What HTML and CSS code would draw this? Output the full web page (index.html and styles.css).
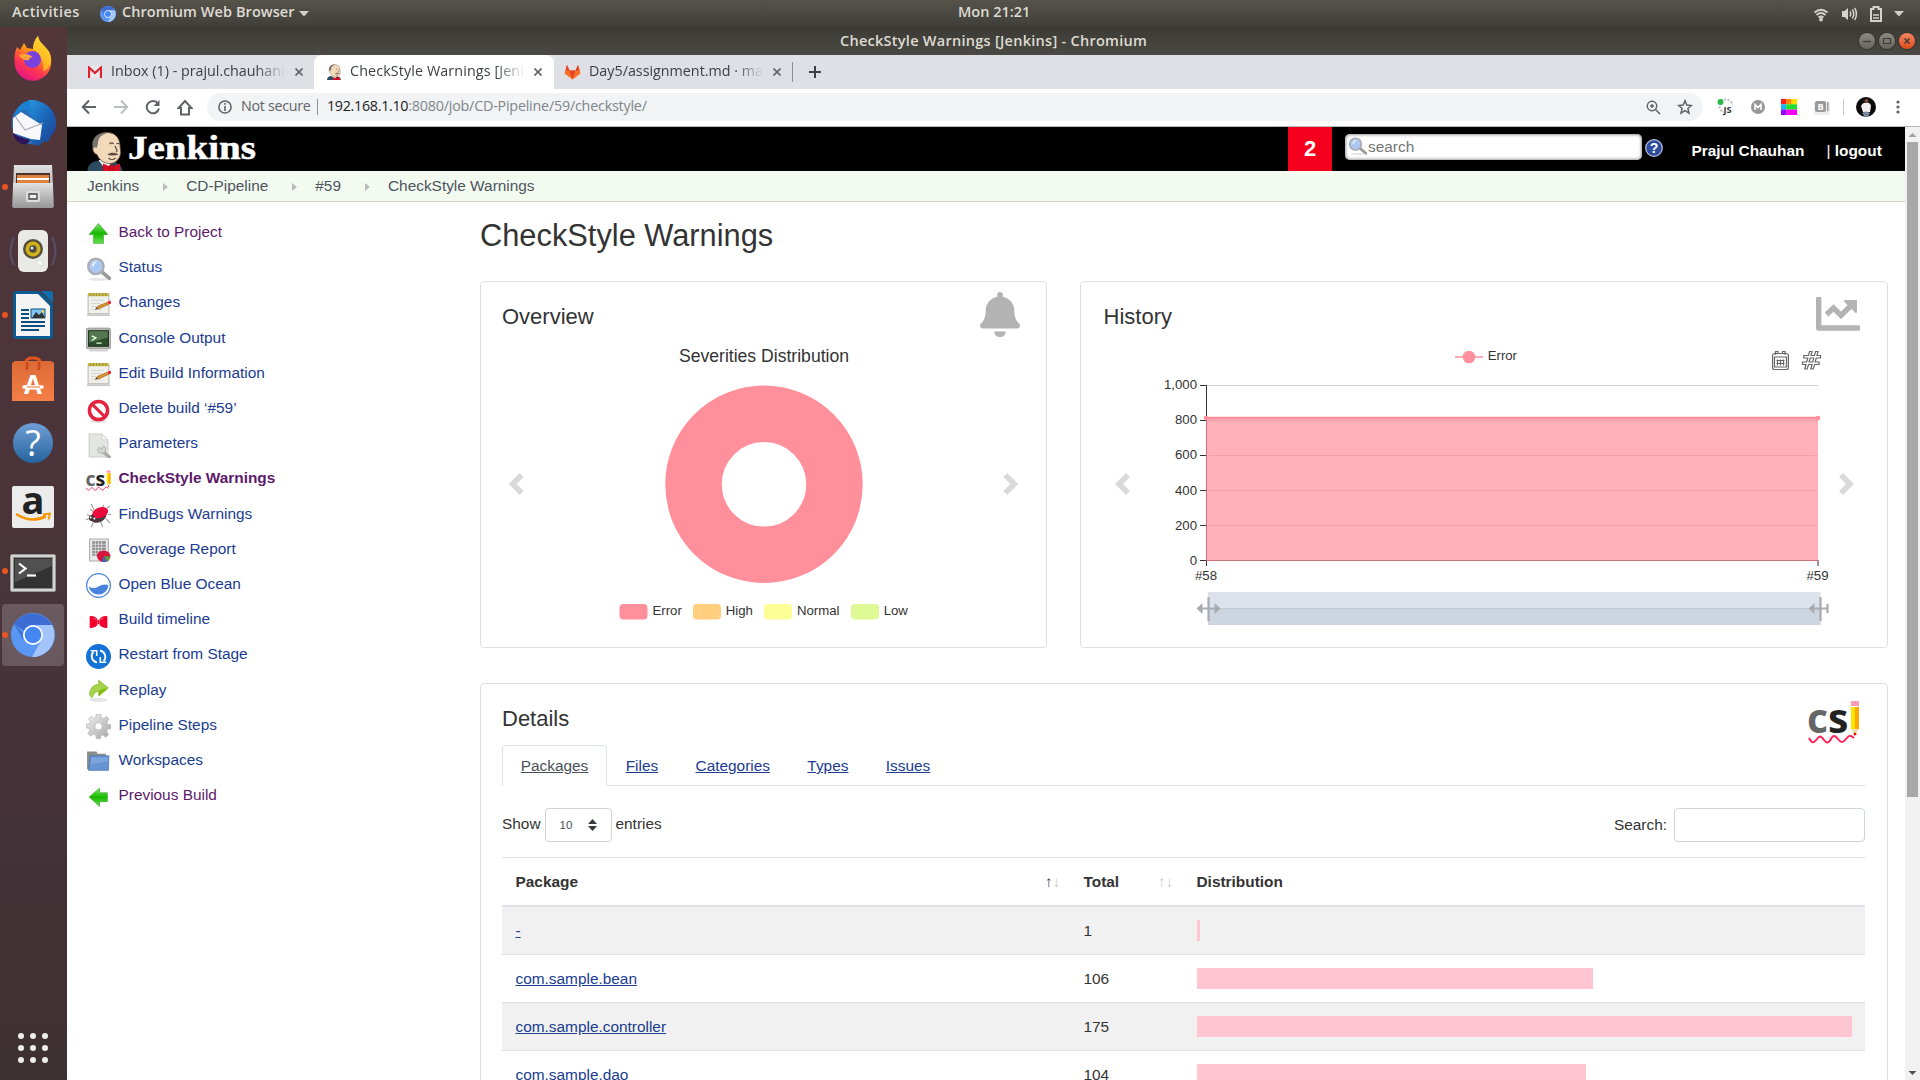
FILE: index.html
```html
<!DOCTYPE html>
<html lang="en">
<head>
<meta charset="utf-8">
<title>CheckStyle Warnings [Jenkins]</title>
<link rel="stylesheet" href="styles.css">
</head>
<body>
<svg class="defs" width="0" height="0">
  <defs>
    <linearGradient id="gFox" x1="0.8" y1="0" x2="0.3" y2="1"><stop offset="0" stop-color="#fff44f"/><stop offset=".4" stop-color="#ff980e"/><stop offset=".7" stop-color="#ff3750"/><stop offset="1" stop-color="#e31587"/></linearGradient>
    <linearGradient id="gBird" x1="0" y1="0" x2="1" y2="1"><stop offset="0" stop-color="#2aa0e8"/><stop offset=".5" stop-color="#1b66b8"/><stop offset="1" stop-color="#1d3f92"/></linearGradient>
    <linearGradient id="gMetal" x1="0" y1="0" x2="0" y2="1"><stop offset="0" stop-color="#e0e0e0"/><stop offset="1" stop-color="#979797"/></linearGradient>
    <linearGradient id="gOrange" x1="0" y1="0" x2="0" y2="1"><stop offset="0" stop-color="#dd6a35"/><stop offset="1" stop-color="#f47f47"/></linearGradient>
    <linearGradient id="gBlue" x1="0" y1="0" x2="0" y2="1"><stop offset="0" stop-color="#6f9fd4"/><stop offset="1" stop-color="#27649f"/></linearGradient>
    <linearGradient id="gGreen" x1="0" y1="0" x2="0" y2="1"><stop offset="0" stop-color="#7ce86a"/><stop offset=".5" stop-color="#19b800"/><stop offset="1" stop-color="#5fe04a"/></linearGradient>
    <linearGradient id="gGear" x1="0" y1="0" x2="1" y2="1"><stop offset="0" stop-color="#f2f2f2"/><stop offset="1" stop-color="#a5a5a5"/></linearGradient>
    <symbol id="notepad" viewBox="0 0 24 24">
      <path d="M2 3h20v18H2z" fill="#f0f0ec" stroke="#b8b8b0"/><path d="M1 22.3h22" stroke="#c9c9c9" stroke-width="1.6"/>
      <path d="M2 1h20v3H2z" fill="#c7b84a"/><path d="M4 1v3M7 1v3M10 1v3M13 1v3M16 1v3M19 1v3" stroke="#8f8430" stroke-width=".8"/>
      <path d="M5 8h12M5 11h9M5 14h5M5 17h10" stroke="#d4d4d0"/>
      <path d="M9 16.500l2.500-3 10-4 1 2-10 4.500z" fill="#dd9430" stroke="#9a6014" stroke-width=".6"/><circle cx="22.500" cy="10" r="1.600" fill="#e8293e"/><path d="M9 16.500l1.400-1.800.8 1.400z" fill="#333"/>
    </symbol>
    <symbol id="jenkinsHead" viewBox="0 0 35 40">
      <path d="M0 40c0-6 4-9 9-10h14c7 1 11 4 12 10z" fill="#2d4b5e"/>
      <path d="M11 29l8 11 6-11z" fill="#fff"/>
      <path d="M6 14C7 6 13 1.500 19.500 1.500c8 0 12.500 5 13 12.500 0 4 1.500 7 0 11s-5 7.500-10 7.500c-7 0-11-4-13-9-4-1-5-6-3.500-9.500z" fill="#f2d9ba" stroke="#5a4838" stroke-width=".8"/>
      <path d="M5.500 17C3 10 8 2 17 1.500l4 .3c-6 1-10 4.500-10.500 9.500 0 3-1 4.500-1.500 6l-1.500-1z" fill="#77736e"/>
      <path d="M22 13c1.500-1.500 3-1.500 4 0M29 13c1-1 2-1 2.500 0M27.500 15c1 3 3.500 5 1 6M21 27c2 2 5 2 7 0" stroke="#54443a" fill="none" stroke-width="1.100"/>
      <path d="M20 23.500c3-2.500 8-2 11 0-3 1-8 1.500-11 0z" fill="#5b4a40"/>
      <path d="M15.500 32.500l7 3v-1.500h3.500v1.500l6.500-3V40H15.500z" fill="#dc0a22"/><path d="M22.500 34v6M26 34v6" stroke="#8f0010" stroke-width=".7"/>
    </symbol>
    <symbol id="csIcon" viewBox="0 0 52 44">
      <text x="-1" y="33" class="cs-c">c</text><text x="20" y="33" class="cs-s">s</text>
      <path d="M43 1h8v5h-8z" fill="#ff9bb5"/><path d="M43 7h8v22h-8z" fill="#ffe600"/><path d="M47 7h4v22h-4z" fill="#ffa800"/><path d="M43 29h8l-4 6z" fill="#f3deb0"/><circle cx="47" cy="34" r="1.500" fill="#e11"/>
      <path d="M1 38c3 6 5 5 8 1s4-3 7 1 5 3 7-1 4-4 7 0 5 4 8 0 4-4 8-1" fill="none" stroke="#ff2255" stroke-width="2"/>
    </symbol>
    <symbol id="chromiumIcon" viewBox="0 0 44 44">
      <circle cx="22" cy="22" r="22" fill="#5a97f5"/><path d="M3 11A22 22 0 0 1 41 12H22A10 10 0 0 0 13 18z" fill="#3d6cd5"/><path d="M41 12A22 22 0 0 1 21 44L31 26Q33 17 25 12z" fill="#a2c4fb"/><path d="M3 11l10 17-2-9z" fill="#3f70cf"/>
      <circle cx="22" cy="22" r="10" fill="#fff"/><circle cx="22" cy="22" r="8.300" fill="#4586f3"/>
    </symbol>
    <symbol id="magnifier" viewBox="0 0 24 24">
      <ellipse cx="12" cy="21.500" rx="9" ry="1.500" fill="#e6e6e6"/><path d="M15.500 14.500l7 6" stroke="#9a9a9a" stroke-width="3.600" stroke-linecap="round"/><circle cx="9.500" cy="9" r="7.300" fill="#bcd4f5" stroke="#a9adb8" stroke-width="2.400"/><circle cx="9.500" cy="9" r="5.500" fill="#a9c8f3"/><path d="M5.500 8a4.500 4.500 0 0 1 6-3.500c-2 .5-4 2-4 5z" fill="#e8f2ff"/>
    </symbol>
  </defs>
</svg>

<header class="topbar">
  <span class="activities">Activities</span>
  <svg width="16" height="16" class="app-ico"><use href="#chromiumIcon"/></svg>
  <span class="appname">Chromium Web Browser</span>
  <svg width="10" height="6" class="caret"><path d="M0 0h10L5 5.500z" fill="#d0cfca"/></svg>
  <span class="clock">Mon 21:21</span>
  <div class="status">
    <svg width="16" height="16" fill="none" stroke="#d3d2cd" stroke-width="1.800"><path d="M1.500 6.500q6.500-5.500 13 0M3.500 9q4.500-4 9 0M5.500 11.500q2.500-2 5 0"/><circle cx="8" cy="13.500" r="1" fill="#d3d2cd"/></svg>
    <svg width="17" height="16" fill="none" stroke="#d3d2cd" stroke-width="1.500"><path d="M1 5h2.500L7 2v12L3.500 11H1z" fill="#d3d2cd" stroke="none"/><path d="M9 5.500q1.500 2.500 0 5M11.300 3.500q3 4.500 0 9M13.700 2q3.500 6 0 12"/></svg>
    <svg width="12" height="16" fill="none" stroke="#d3d2cd" stroke-width="2"><path d="M3.500 1h5v2H11v12H1V3h2.500z"/><path d="M3 9h6M3 12h6" stroke-width="1.500"/></svg>
    <svg width="10" height="6"><path d="M0 0h10L5 5.500z" fill="#d0cfca"/></svg>
  </div>
</header>

<div class="desktop">
  <nav class="dock">
    <div class="dock-item fox"><svg width="38" height="46" viewBox="0 0 38 46"><path d="M3 12l3 3 4-7 3 5 6 1c0-5 2-10 5-13 1 6 5 8 8 12 3 3 6 7 5 17A18.300 18.300 0 0 1 .6 28C0 21 1 16 3 12z" fill="url(#gFox)"/><path d="M24 1c1 6 5 8 8 12 3 3 6 7 5 15-2 5-6 8-8 8 2-8-2-16-10-22 0-5 2-10 5-13z" fill="#ffc928" opacity=".75"/><circle cx="18.500" cy="24.500" r="8.500" fill="#7840dc"/><path d="M5 20c5-2 10-1 14 2-2 0-4 1-4 3-4 1-8-1-10-5z" fill="#ffa436"/></svg></div>
    <div class="dock-item"><svg width="48" height="48" viewBox="0 0 48 48"><circle cx="24" cy="24" r="21.500" fill="#2b6cb8"/><path d="M20 1c12-1 25 7 27 20 1 8-2 13-5 16l-3 6-5-1-4 5-8-3 9-14L15 6z" fill="url(#gBird)"/><path d="M4 19l8-6 21 13-2 15-9-1L4 34z" fill="#f8f8fa"/><path d="M6 17l10 14 18-7" fill="none" stroke="#aab" stroke-width="1.200"/><path d="M5 18C8 7 14 1 22 2c-2 6 0 9 6 15L15 10z" fill="#1d7fd0"/><path d="M4 34c5 4 12 5 17 7-1 3-4 5-8 4-5-2-8-6-9-11z" fill="#2d1458"/></svg></div>
    <div class="dock-item running"><svg width="42" height="44" viewBox="0 0 42 44"><path d="M2 0h38l2 42H0z" fill="url(#gMetal)"/><path d="M4 8h34v11H4z" fill="#46352e"/><path d="M5 10h32v8H5z" fill="#e0823a"/><path d="M5 13h32v2H5z" fill="#fff"/><path d="M1 18h40v25H1z" fill="url(#gMetal)"/><rect x="14" y="26" width="14" height="11" rx="2" fill="#ddd"/><path d="M17 29h8v5h-8z" fill="#eee" stroke="#444" stroke-width="1.300"/></svg></div>
    <div class="dock-item"><svg width="48" height="44" viewBox="0 0 48 44"><path d="M5 8q-7 14 0 28M43 8q7 14 0 28" fill="none" stroke="#56506a" stroke-width="2"/><rect x="9" y="1" width="30" height="42" rx="6" fill="#e9e9e6"/><circle cx="24" cy="20" r="10" fill="#55503c"/><circle cx="24" cy="20" r="7.500" fill="#d2b11c"/><circle cx="24" cy="20" r="3.800" fill="#4c4a44"/><circle cx="23" cy="19" r="1.500" fill="#ddd"/><circle cx="31" cy="34" r="3" fill="#fafafa" stroke="#ccc" stroke-width=".6"/></svg></div>
    <div class="dock-item running"><svg width="40" height="48" viewBox="0 0 40 48"><path d="M3 0h23l14 13v32a3 3 0 0 1-3 3H3a3 3 0 0 1-3-3V3a3 3 0 0 1 3-3z" fill="#0d5c91"/><path d="M28 0h9a3 3 0 0 1 3 3v9z" fill="#0f6fae"/><path d="M3 3h22l12 12v30H3z" fill="#f4f4f4"/><path d="M8 19h8M8 23h8M8 27h8M8 31h24M8 35h24M8 39h18" stroke="#0d4f7f" stroke-width="2"/><path d="M18 18h14v9H18z" fill="#7fc7f2" stroke="#0d4f7f"/><path d="M19 27l4-6 3 3 3-3 3 6z" fill="#333"/><circle cx="30" cy="20.500" r="1.300" fill="#ffd23e"/></svg></div>
    <div class="dock-item"><svg width="42" height="44" viewBox="0 0 42 44"><path d="M14 8V5q0-4 7-4t7 4v8M14 8v6" fill="none" stroke="#e0531f" stroke-width="3"/><path d="M0 6l3-2h36l3 2v38H0z" fill="url(#gOrange)"/><path d="M15 5v8M27 5v8" stroke="#c9481c" stroke-width="2.500"/><text x="21" y="36.500" class="store-a">A</text><path d="M12 30h18" stroke="#fff" stroke-width="3.600" stroke-linecap="round"/><path d="M15 30h13" stroke="#ee6d30" stroke-width="1"/></svg></div>
    <div class="dock-item"><svg width="42" height="42" viewBox="0 0 42 42"><circle cx="21" cy="21" r="20" fill="url(#gBlue)"/><text x="21" y="33.500" class="help-q">?</text></svg></div>
    <div class="dock-item"><svg width="42" height="42" viewBox="0 0 42 42"><rect width="42" height="42" rx="2" fill="#ececec"/><text x="21" y="28" class="amz">a</text><path d="M4 28q16 10 30 2" fill="none" stroke="#f79400" stroke-width="2.600"/><path d="M31 28.500l7-1-1.500 6" fill="none" stroke="#f79400" stroke-width="1.800"/></svg></div>
    <div class="dock-item running term"><svg width="46" height="38" viewBox="0 0 46 38"><rect x=".5" y=".5" width="45" height="37" rx="1.500" fill="#d4d4d4" stroke="#999"/><path d="M3.500 3.500h39v31h-39z" fill="#333" stroke="#888"/><path d="M5 5h37v7L5 28z" fill="#505050"/><path d="M9 9.500l6.500 5-6.500 5" fill="none" stroke="#fff" stroke-width="2.200"/><path d="M17 21.500h9" stroke="#fff" stroke-width="2.200"/></svg></div>
    <div class="dock-item running active"><svg width="44" height="44"><use href="#chromiumIcon"/></svg></div>
    <svg class="apps" width="32" height="32" fill="#eeeeec"><circle cx="4" cy="4" r="3"/><circle cx="16" cy="4" r="3"/><circle cx="28" cy="4" r="3"/><circle cx="4" cy="16" r="3"/><circle cx="16" cy="16" r="3"/><circle cx="28" cy="16" r="3"/><circle cx="4" cy="28" r="3"/><circle cx="16" cy="28" r="3"/><circle cx="28" cy="28" r="3"/></svg>
  </nav>

  <section class="window">
    <div class="titlebar">
      <span class="wtitle">CheckStyle Warnings [Jenkins] - Chromium</span>
      <div class="wbtns">
        <i class="wbtn"><svg width="16" height="16"><path d="M4 8.500h8" stroke="#3c3b37" stroke-width="1.200"/></svg></i>
        <i class="wbtn"><svg width="16" height="16"><path d="M4.500 5.500h7v5h-7z" stroke="#3c3b37" stroke-width="1.200" fill="none"/></svg></i>
        <i class="wbtn close"><svg width="16" height="16"><path d="M5.500 5.500l5 5M10.500 5.500l-5 5" stroke="#3c3b37" stroke-width="1.400"/></svg></i>
      </div>
    </div>

    <div class="tabs">
      <div class="tab first">
        <svg width="14" height="12" class="fav"><path d="M0 0h14v12H0z" fill="#e8e8ea"/><path d="M1 12V1.500l6 5.500 6-5.500V12" fill="none" stroke="#e0212f" stroke-width="2.200"/></svg>
        <span class="tab-text">Inbox (1) - prajul.chauhan@</span>
        <svg width="8" height="8" class="x"><path d="M.5.5l7 7M7.500.5l-7 7" stroke="#5f6368" stroke-width="1.600"/></svg>
      </div>
      <div class="tab current">
        <svg width="16" height="16" class="fav"><use href="#jenkinsHead"/></svg>
        <span class="tab-text">CheckStyle Warnings [Jenkins]</span>
        <svg width="8" height="8" class="x"><path d="M.5.5l7 7M7.500.5l-7 7" stroke="#5f6368" stroke-width="1.600"/></svg>
      </div>
      <div class="tab third">
        <svg width="17" height="16" class="fav" viewBox="0 0 17 16"><path d="M8.500 15.500L.5 9.500 3 1l2.500 5.500h6L14 1l2.500 8.500z" fill="#fc6d26"/><path d="M8.500 15.500l-3-9h6z" fill="#e24329"/><path d="M3 1l2.500 5.500H1.400zM14 1l-2.500 5.500h4.100z" fill="#e24329"/></svg>
        <span class="tab-text">Day5/assignment.md · master</span>
        <svg width="8" height="8" class="x"><path d="M.5.5l7 7M7.500.5l-7 7" stroke="#5f6368" stroke-width="1.600"/></svg>
      </div>
      <i class="tab-sep"></i>
      <svg width="12" height="12" class="plus"><path d="M6 0v12M0 6h12" stroke="#3c4043" stroke-width="2"/></svg>
    </div>

    <div class="toolbar">
      <div class="nav-ico">
        <svg width="16" height="16" fill="none" stroke="#5f6368" stroke-width="2"><path d="M15 8H2M8 1.500L1.800 8 8 14.500"/></svg>
        <svg width="16" height="16" fill="none" stroke="#bcbec1" stroke-width="2"><path d="M1 8h13M8 1.500L14.200 8 8 14.500"/></svg>
        <svg width="16" height="16" fill="none" stroke="#5f6368" stroke-width="2"><path d="M13 4.500A6.200 6.200 0 1 0 14 9.500"/><path d="M14.500 1v6H8.500z" fill="#5f6368" stroke="none"/></svg>
        <svg width="16" height="17" fill="none" stroke="#5f6368" stroke-width="2"><path d="M8 2L1.500 9H4v6.500h8V9h2.500z"/></svg>
      </div>
      <div class="omnibox">
        <svg width="14" height="14" class="info"><circle cx="7" cy="7" r="6.100" fill="none" stroke="#5f6368" stroke-width="1.500"/><path d="M7 3v1.800M7 6v5" stroke="#5f6368" stroke-width="1.600"/></svg>
        <span class="nsec">Not secure</span><i class="osep"></i>
        <span class="url"><b>192.168.1.10</b>:8080/job/CD-Pipeline/59/checkstyle/</span>
        <svg width="15" height="15" class="omz" fill="none" stroke="#5f6368" stroke-width="1.500"><circle cx="6" cy="6" r="4.700"/><path d="M9.500 9.500l4.500 4.500M6 4v4M4 6h4"/></svg>
        <svg width="16" height="16" fill="none" stroke="#5f6368" stroke-width="1.500"><path d="M8 1.800l1.800 4.300 4.600.4-3.500 3 1.100 4.600L8 11.700l-4 2.400 1.100-4.600-3.500-3 4.600-.4z"/></svg>
      </div>
      <div class="exts">
        <svg width="17" height="18"><circle cx="9" cy="8" r="6.500" fill="none" stroke="#bbb" stroke-width="2" stroke-dasharray="2 1.500"/><circle cx="3.500" cy="4" r="3" fill="#2db84d"/><path d="M7 7h10v11H7z" fill="#fff" opacity=".7"/><text x="6.500" y="15" class="js">JS</text></svg>
        <svg width="14" height="14"><circle cx="7" cy="7" r="7" fill="#969696"/><path d="M4 10V4.500l3 3 3-3V10" fill="none" stroke="#fff" stroke-width="1.600"/></svg>
        <svg width="16" height="16"><path d="M0 0h5.400v5.400H0z" fill="#ff2020"/><path d="M5.300 0h5.400v5.400H5.300z" fill="#ff8800"/><path d="M10.600 0H16v5.400h-5.400z" fill="#ffdc00"/><path d="M0 5.300h5.400v5.400H0z" fill="#12b8f5"/><path d="M5.300 5.300H16v5.400H5.300z" fill="#1ee02c"/><path d="M0 10.600h5.400V16H0z" fill="#9000ff"/><path d="M5.300 10.600H16V16H5.300z" fill="#f800f8"/></svg>
        <svg width="16" height="16"><path d="M0 3h16v13H0z" fill="#eee"/><rect x="1" y="2" width="11" height="11" rx="2" fill="#999"/><text x="6.500" y="11" class="bx">B</text><path d="M13.800 3v9" stroke="#999" stroke-width="1.500"/></svg>
        <i class="esep"></i>
        <svg width="20" height="20"><circle cx="10" cy="10" r="10" fill="#0b0b0b"/><circle cx="10.500" cy="4" r="2" fill="#7c4c37"/><path d="M5 9q2-4 5-3 4-1 5 3l-1 6H7z" fill="#f1eef0"/><path d="M6 16q4-3 8 0l-2 4H9z" fill="#7388a0"/></svg>
        <svg width="4" height="14" fill="#5f6368"><circle cx="2" cy="2" r="1.600"/><circle cx="2" cy="7" r="1.600"/><circle cx="2" cy="12" r="1.600"/></svg>
      </div>
    </div>

    <div class="viewport">
      <div class="page">
        <div class="jhead">
          <svg width="36" height="40" class="jlogo"><use href="#jenkinsHead"/></svg>
          <svg width="132" height="36" class="jname"><text x="1" y="25" textLength="128" lengthAdjust="spacingAndGlyphs">Jenkins</text></svg>
          <span class="alerts">2</span>
          <div class="jsearch"><svg width="19" height="19"><use href="#magnifier"/></svg><span>search</span></div>
          <svg width="18" height="18" class="jhelp"><circle cx="9" cy="9" r="8.300" fill="#2e4e9d" stroke="#b9c4de" stroke-width="1.200"/><text x="9" y="14" class="jq">?</text></svg>
          <b class="juser">Prajul Chauhan</b>
          <span class="jout">| <b>logout</b></span>
        </div>
        <div class="crumbs">
          <span>Jenkins</span><i></i><span>CD-Pipeline</span><i></i><span>#59</span><i></i><span>CheckStyle Warnings</span>
        </div>

        <div class="main">
          <ul class="side">
            <li class="seen"><svg viewBox="0 0 24 24"><path d="M12 1.500l9 10.500h-4.300v8.500H7.300V12H3z" fill="url(#gGreen)" stroke="#3faa2f" stroke-width=".7"/></svg>Back to Project</li>
            <li><svg><use href="#magnifier"/></svg>Status</li>
            <li><svg><use href="#notepad"/></svg>Changes</li>
            <li><svg viewBox="0 0 24 24"><rect x="0" y="1" width="24" height="20" rx="2.500" fill="#b6b8b2" stroke="#8c8e88" stroke-width=".7"/><path d="M2.500 3.500h19v15h-19z" fill="#2c4d2c" stroke="#1c2e1c"/><path d="M3 4h18v6L3 15z" fill="#55774f"/><path d="M5.500 8.500l4 2-4 2.500M10 15.500h5" stroke="#dfffd8" fill="none" stroke-width="1.300"/><path d="M3 22.800h18" stroke="#bbb"/></svg>Console Output</li>
            <li><svg><use href="#notepad"/></svg>Edit Build Information</li>
            <li><svg viewBox="0 0 24 24"><ellipse cx="12" cy="22.500" rx="8" ry="1.200" fill="#ddd"/><circle cx="12" cy="12" r="8.700" fill="#fff" stroke="#e5243f" stroke-width="3.400"/><path d="M6 6l12 12" stroke="#e5243f" stroke-width="3"/></svg>Delete build ‘#59’</li>
            <li><svg viewBox="0 0 24 24"><path d="M3 1h12l6 5.500V23H3z" fill="#e3e7e3" stroke="#c9cdc9"/><path d="M15 1v5.500h6z" fill="#f6f6f6" stroke="#c9cdc9" stroke-width=".7"/><path d="M15 17l8.500 7" stroke="#a9ada9" stroke-width="3.200"/><path d="M12.500 13.500l2.500 2.500 1.500-3.500q3 1 2.500 4t-4 3-4-3z" fill="#d5d9d5" stroke="#a3a7a3" stroke-width=".8"/></svg>Parameters</li>
            <li class="seen here"><svg><use href="#csIcon"/></svg>CheckStyle Warnings</li>
            <li><svg viewBox="0 0 24 24"><path d="M4 6l4 3M5 1l3 6M17 2l-2 4M20 5l3-2M21 11h3M19 15l4 4M14 18l2 5M7 19l-2 4M3 15l-3 1M1 11l4 2" stroke="#999" stroke-width="1"/><ellipse cx="12" cy="13" rx="8" ry="5.500" transform="rotate(-25 12 13)" fill="#4d3a3d"/><ellipse cx="13.500" cy="9.500" rx="7.800" ry="5" transform="rotate(-20 13 9)" fill="#ea0a3c"/><circle cx="5.500" cy="14.500" r="2.800" fill="#433"/><circle cx="4.500" cy="14" r="1" fill="#fff"/><circle cx="8" cy="15" r="1" fill="#fff"/></svg>FindBugs Warnings</li>
            <li><svg viewBox="0 0 24 24"><path d="M3.500 1h18v21h-18z" fill="#e9e9e9" stroke="#aaa"/><path d="M6 3h13v14H6z" fill="#8f8f8f"/><path d="M6 6h13M6 9h13M6 12h13M6 15h13M9 3v14M12 3v14M15 3v14" stroke="#ddd" stroke-width=".8"/><ellipse cx="17" cy="17.500" rx="6.500" ry="5.500" fill="#d8143c"/><path d="M17 17.500h6q0 4-3 5z" fill="#5a9c3e"/><path d="M17 17.500l3 5q-4 1-5 0z" fill="#4c5cc0"/></svg>Coverage Report</li>
            <li><svg viewBox="0 0 24 24"><circle cx="12" cy="12" r="11.400" fill="#fff" stroke="#4580dd" stroke-width="1.200"/><path d="M2.500 13q5 3 9.500 0t9.500-1.500A9.600 9.600 0 0 1 2.500 13z" fill="#4a82e0"/></svg>Open Blue Ocean</li>
            <li><svg viewBox="0 0 24 24"><path d="M3.500 7q5-1 8 3.500h1q3-4.500 8-3.500v11q-5 1-8-3.500h-1q-3 4.500-8 3.500z" fill="#f3002f"/><path d="M10 10l-3-1M14 10l3-1M11 10v6M13 10v6" stroke="#ff8a9d" stroke-width=".6"/></svg>Build timeline</li>
            <li><svg viewBox="0 0 24 24"><circle cx="12" cy="12" r="12" fill="#1472d6"/><path d="M10.500 17.800A6.300 6.300 0 0 1 7 7.500M13.500 6.200A6.300 6.300 0 0 1 17 16.500" fill="none" stroke="#fff" stroke-width="1.800"/><path d="M4.500 6.500h5.800v5M19.500 17.500h-5.800v-5" fill="none" stroke="#fff" stroke-width="1.500"/></svg>Restart from Stage</li>
            <li><svg viewBox="0 0 24 24"><ellipse cx="12" cy="20" rx="9" ry="2" fill="#e6e6e6"/><path d="M12 1l9.500 7.500L12 16.500V12q-4 0-6 6-4-2-2-7 2-5.500 8-6z" fill="#a5d34b" stroke="#90bf3c" stroke-width=".7"/><path d="M15 9.500l6-.5-8.500 7v-4.500z" fill="#82be10"/></svg>Replay</li>
            <li><svg viewBox="0 0 24 24"><path d="M10 0h4l.7 3.500 2 .8L19.800 2.500l2.200 2.500-2 3 .8 2 3.200.5v3.500l-3.300.7-.9 2 1.900 3-2.700 2.500-2.900-2-2 .9L14 23.500h-4l-.7-3.400-2-.8-3 1.900L1.800 18.500l2-2.800-.8-2L0 13.300V10l3.300-.7.9-2L2.500 4.500 5 2.200l2.500 2 1.800-.8z" fill="url(#gGear)" stroke="#b4b4b4" stroke-width=".7"/><circle cx="12" cy="11.800" r="3.400" fill="#fff" stroke="#bbb" stroke-width=".6"/></svg>Pipeline Steps</li>
            <li><svg viewBox="0 0 24 24"><path d="M1 2.500h9l1 2h8v15H1z" fill="#8d8d88"/><path d="M4 6.500h18l-.5 14h-19z" fill="#6795d2" stroke="#4671ad" stroke-width=".7"/><path d="M5 8h16v4L4.500 14.500z" fill="#7ba5dd"/></svg>Workspaces</li>
            <li class="seen"><svg viewBox="0 0 24 24"><path d="M3 11.500L13 3v4.500h7.500V16H13v4.500z" fill="url(#gGreen)" stroke="#3faa2f" stroke-width=".7"/></svg>Previous Build</li>
          </ul>

          <div class="content">
            <h1>CheckStyle Warnings</h1>
            <div class="cards">
              <div class="card">
                <div class="card-head"><h2>Overview</h2>
                  <svg class="bell" width="40" height="45" viewBox="0 0 448 512" preserveAspectRatio="none" fill="#b3b3b3"><path d="M224 512c35.320 0 63.970-28.650 63.970-64H160.030c0 35.350 28.650 64 63.970 64zm215.390-149.710c-19.320-20.760-55.470-51.990-55.470-154.290 0-77.700-54.480-139.900-127.940-155.160V32c0-17.670-14.320-32-31.980-32s-31.980 14.330-31.980 32v20.840C118.560 68.100 64.080 130.300 64.080 208c0 102.300-36.150 133.530-55.470 154.290-6 6.450-8.660 14.160-8.610 21.710.11 16.400 12.980 32 32.100 32h383.800c19.120 0 32-15.600 32.100-32 .05-7.550-2.610-15.270-8.610-21.710z"/></svg>
                </div>
                <svg class="chart" width="565" height="307" viewBox="481 340 565 307">
                  <text x="764" y="362" class="ctitle mid">Severities Distribution</text>
                  <circle cx="764" cy="484.300" r="70.500" fill="none" stroke="#ff8f9a" stroke-width="56.500"/>
                  <path d="M521.700 475L512.700 484l9 9M1005.300 475L1014.300 484l-9 9" class="chev"/>
                  <g class="lab">
                    <rect x="619.500" y="604" width="28" height="15.500" rx="4" fill="#ff8f9a"/><text x="652.500" y="615">Error</text>
                    <rect x="693" y="604" width="28" height="15.500" rx="4" fill="#ffce7f"/><text x="725.700" y="615">High</text>
                    <rect x="764" y="604" width="28" height="15.500" rx="4" fill="#fcfe96"/><text x="797" y="615">Normal</text>
                    <rect x="851" y="604" width="28" height="15.500" rx="4" fill="#dff995"/><text x="883.700" y="615">Low</text>
                  </g>
                </svg>
              </div>
              <div class="card hist">
                <div class="card-head"><h2>History</h2>
                  <svg class="trend" width="44" height="34" viewBox="0 0 44 34"><path d="M2.700 2v29h39.500" fill="none" stroke="#b3b3b3" stroke-width="5.400" stroke-linecap="round" stroke-linejoin="round"/><path d="M10.500 17.500l7-6.500 7.500 7.500 9-9" fill="none" stroke="#b3b3b3" stroke-width="5.400"/><path d="M29 4h11v11z" fill="#b3b3b3" stroke="#b3b3b3" stroke-width="2" stroke-linejoin="round"/></svg>
                </div>
                <svg class="chart" width="806" height="307" viewBox="1081 340 806 307">
                  <path d="M1455 357h28" stroke="#ff8f9a" stroke-width="2" opacity=".75"/><circle cx="1469" cy="357" r="6.300" fill="#ff8f9a"/>
                  <g class="lab"><text x="1487.700" y="360">Error</text></g>
                  <g fill="none" stroke="#666" stroke-width="1.200"><rect x="1772.600" y="353.500" width="15.800" height="16" rx="2"/><path d="M1775.500 355v-3.500h2.500v2M1782.500 354v-2.500h2.500v3.500"/><path d="M1774.500 357h12v10h-12zM1776.500 360.500h8M1776.500 363.500h8M1777.500 359.500v6M1780.500 359.500v6M1783.500 359.500v6"/>
                  <path d="M1809.500 351.500h2.500l-1 4h3.500l1-4h2.500l-1 4h3.500v2.500h-4.200l-1.200 4h4v2.500h-4.500l-1.300 4.500h-2.500l1.200-4.500h-3.500l-1.300 4.500h-2.500l1.300-4.500h-3.500V362h4.200l1.100-4h-4v-2.500h4.600zM1810.300 358l-1.200 4h3.500l1.200-4z"/></g>
                  <path d="M1206 385.500h612" stroke="#ccc"/>
                  <path d="M1206 420.500h612M1206 455.500h612M1206 490.500h612M1206 525.500h612" stroke="#ccc"/>
                  <path d="M1206.500 385v181M1200 385.500h6M1200 420.500h6M1200 455.500h6M1200 490.500h6M1200 525.500h6M1200 560.500h618.500M1818 561v5" stroke="#333" fill="none"/>
                  <path d="M1206 418h612v143h-612z" fill="#ff8f9a" opacity=".7"/>
                  <path d="M1206 418h612" stroke="#ff8f9a" stroke-width="2.500"/><circle cx="1206" cy="418" r="2.300" fill="#ff8f9a"/><circle cx="1818" cy="418" r="2.300" fill="#ff8f9a"/>
                  <g class="lab end"><text x="1197" y="389">1,000</text><text x="1197" y="424">800</text><text x="1197" y="459">600</text><text x="1197" y="494.500">400</text><text x="1197" y="529.500">200</text><text x="1197" y="564.500">0</text></g>
                  <g class="lab mid"><text x="1206" y="580">#58</text><text x="1817.500" y="580">#59</text></g>
                  <path d="M1208 592h612.500v33H1208z" fill="#dce1eb"/><path d="M1208 609h612.500v16H1208z" fill="#cdd5e0"/><path d="M1208 608.500h612.500" stroke="#c3cad5"/>
                  <path d="M1208.500 597v24M1820.500 597v24M1201 608.500h15M1813 608.500h14M1827.500 604v9" stroke="#a7abb0" stroke-width="2.200"/>
                  <path d="M1196.500 608.500l6-5.500v11zM1220.500 608.500l-6-5.500v11zM1808.500 608.500l6-5.500v11z" fill="#a7abb0"/>
                  <path d="M1128 475L1119 484l9 9M1841 475L1850 484l-9 9" class="chev"/>
                </svg>
              </div>
            </div>

            <div class="card details">
              <div class="card-head dh"><h2>Details</h2><svg class="dcs" width="52" height="44"><use href="#csIcon"/></svg></div>
              <div class="dtabs"><a class="on">Packages</a><a>Files</a><a>Categories</a><a>Types</a><a>Issues</a></div>
              <div class="controls">
                <span>Show</span>
                <div class="select">10<svg width="9" height="12"><path d="M0 5L4.500 0 9 5zM0 7h9l-4.500 5z" fill="#343a40"/></svg></div>
                <span>entries</span>
                <span class="slabel">Search:</span><div class="sinput"></div>
              </div>
              <div class="table">
                <div class="tr th"><span>Package<em><u>↑</u>↓</em></span><span>Total<em>↑↓</em></span><span>Distribution</span></div>
                <div class="tr odd"><span><a>-</a></span><span>1</span><span><i style="width:0.6%"></i></span></div>
                <div class="tr"><span><a>com.sample.bean</a></span><span>106</span><span><i style="width:60.57%"></i></span></div>
                <div class="tr odd"><span><a>com.sample.controller</a></span><span>175</span><span><i style="width:100%"></i></span></div>
                <div class="tr"><span><a>com.sample.dao</a></span><span>104</span><span><i style="width:59.43%"></i></span></div>
              </div>
            </div>
          </div>
        </div>
      </div>
      <div class="scroll">
        <svg width="15" height="15"><path d="M3.500 10h8L7.500 6z" fill="#a3a3a3"/></svg>
        <div class="thumb"></div>
        <svg width="15" height="15" class="down"><path d="M3.500 6h8L7.500 10z" fill="#505050"/></svg>
      </div>
    </div>
  </section>
</div>
</body>
</html>
```

FILE: styles.css
```css
* { box-sizing: border-box; }
body { margin: 0; width: 1920px; height: 1080px; overflow: hidden; font-family: "Liberation Sans", Arial, sans-serif; font-size: 15.4px; color: #333; background: #fff; }
svg { display: block; flex: none; }
i { font-style: normal; }
.defs { position: absolute; }

.topbar { height: 27px; display: flex; align-items: center; background: linear-gradient(#56534b, #3f3e39); color: #dfdbd2; font: 600 14.5px/24px "Open Sans", sans-serif; padding: 0 16px 0 12px; position: relative; }
.topbar > span { height: 27px; }
.activities { width: 88px; letter-spacing: .42px; }
.app-ico { margin-right: 6px; }
.appname { width: 172px; white-space: nowrap; letter-spacing: .07px; margin-right: 5px; }
.clock { position: absolute; left: 958px; top: 0; }
.status { margin-left: auto; display: flex; align-items: center; gap: 12px; }

.desktop { display: flex; height: 1053px; }
.dock { width: 67px; flex: none; background: linear-gradient(#523639, #47333a 60%, #3d3033); display: flex; flex-direction: column; align-items: center; }
.dock-item { width: 67px; height: 64px; display: flex; align-items: center; justify-content: center; position: relative; padding-right: 1px; }
.dock-item.running::before { content: ""; position: absolute; left: 2px; top: 29px; width: 6px; height: 6px; border-radius: 3px; background: #e95420; }
.dock-item.active::after { content: ""; position: absolute; left: 2px; top: 1px; width: 62px; height: 62px; border-radius: 4px; background: rgba(255,255,255,.19); z-index: 0; }
.dock-item svg, .dock-item.running::before { z-index: 1; }
.dock-item svg { position: relative; overflow: visible; }
.dock-item.fox { padding-bottom: 3px; }
.dock-item.term { padding-top: 3px; }
.apps { margin: auto 1px 16px 0; }
.store-a { font: bold 26px "Open Sans", sans-serif; fill: #fff; text-anchor: middle; }
.help-q { font: 36px "Open Sans", sans-serif; fill: #fff; text-anchor: middle; }
.amz { font: bold 38px "Open Sans", sans-serif; fill: #222; text-anchor: middle; }

.window { flex: 1; display: flex; flex-direction: column; min-width: 0; }
.titlebar { height: 28px; background: linear-gradient(#3b3a35, #4b4943); display: flex; align-items: center; justify-content: center; position: relative; color: #dfdbd2; font: 600 14.5px "Open Sans", sans-serif; padding-bottom: 2px; }
.wtitle { letter-spacing: .27px; }
.wbtns { position: absolute; right: 5px; top: 6px; display: flex; gap: 4px; }
.wbtn { width: 16px; height: 16px; border-radius: 8px; background: linear-gradient(#8c8a84, #66645e); box-shadow: 0 0 1px 1px #33322e; }
.wbtn.close { background: linear-gradient(#f5865f, #df4b1a); }

.tabs { height: 34px; background: #dee0e6; display: flex; align-items: center; font: 14.3px/30px "Open Sans", sans-serif; color: #3c4043; }
.tab { height: 34px; display: flex; align-items: center; }
.tab.first { width: 247px; padding-left: 21px; }
.tab.current { width: 240px; padding-left: 12px; background: #fff; border-radius: 8px 8px 0 0; }
.tab.third { width: 238px; padding-left: 10px; }
.tab-text { width: 175px; height: 32px; overflow: hidden; white-space: nowrap; margin-left: 8px; margin-right: 9px; mask-image: linear-gradient(90deg, #000 145px, transparent 175px); }
.first .tab-text { margin-left: 9px; }
.current .tab-text { letter-spacing: .12px; }
.tab-sep { width: 1px; height: 20px; background: #8c8f94; }
.plus { margin-left: 16px; }

.toolbar { height: 38px; background: #fff; border-bottom: 1px solid #b6bab8; display: flex; align-items: center; padding-left: 14px; padding-bottom: 1px; }
.nav-ico { display: flex; gap: 16px; width: 126px; }
.omnibox { width: 1496px; height: 28px; border-radius: 14px; background: #f1f3f4; display: flex; align-items: center; font: 14.3px/26px "Open Sans", sans-serif; color: #5f6368; padding-left: 11px; padding-right: 10px; }
.omnibox span { height: 28px; }
.nsec { margin-left: 9px; width: 72px; white-space: nowrap; letter-spacing: -.3px; }
.osep { width: 1px; height: 16px; background: #8f9296; margin: 0 9px 0 4px; }
.url { letter-spacing: -.2px; color: #80868b; }
.url b { font-weight: normal; color: #202124; letter-spacing: -.3px; }
.omz { margin-left: auto; margin-right: 16px; }
.exts { display: flex; align-items: center; margin-left: 14px; gap: 16.5px; }
.exts > :nth-child(5) { margin-left: -3px; margin-right: -5px; }
.exts > :last-child { margin-left: 4px; }
.esep { width: 1px; height: 16px; background: #c4c6c9; }
.js { font: bold 9px "Open Sans", sans-serif; fill: #333; }
.bx { font: bold 9px "Open Sans", sans-serif; fill: #fff; text-anchor: middle; }

.viewport { flex: 1; display: flex; min-height: 0; overflow: hidden; }
.page { width: 1838px; overflow: hidden; }
.scroll { width: 15px; background: #f1f1f1; display: flex; flex-direction: column; }
.thumb { height: 655px; margin: 0 2px; background: #a8a8a8; }
.down { margin-top: auto; }

.jhead { height: 44px; background: #000; color: #fff; display: flex; align-items: flex-start; padding-left: 20px; }
.jlogo { margin-top: 4px; width: 36px; }
.jname { margin: 7px 0 0 4px; font: bold 34px "Liberation Serif", serif; fill: #fff; stroke: #fff; stroke-width: .5px; }
.alerts { margin-left: 1029px; width: 44px; height: 44px; background: #f5001d; font: bold 22px/44px "Liberation Sans", sans-serif; text-align: center; }
.jsearch { margin: 7px 0 0 13px; width: 297px; height: 26px; border-radius: 5px; background: #fff; box-shadow: inset 0 0 3px 1px #999; display: flex; align-items: center; padding-left: 3px; color: #757575; }
.jsearch svg { margin-right: 1px; margin-top: -2px; }
.jhelp { margin: 12px 0 0 3px; }
.jq { font: bold 14px "Liberation Sans", sans-serif; fill: #fff; text-anchor: middle; }
.juser { margin: 15px 0 0 28.5px; width: 135px; line-height: 18px; }
.jout { margin-top: 15px; line-height: 18px; }
.crumbs { height: 31px; background: #f3fbf1; border-bottom: 1px solid #ccd6ca; display: flex; align-items: center; padding-left: 20px; color: #4d545d; }
.crumbs i { border-left: 5px solid #bbb; border-top: 4.5px solid transparent; border-bottom: 4.5px solid transparent; margin: 1px 18px 0 24px; }

.main { display: flex; }
.side { list-style: none; margin: 0; padding: 13px 0 0 19px; width: 413px; flex: none; }
.side li { height: 35.2px; display: flex; align-items: center; color: #203c90; padding-bottom: 1px; white-space: nowrap; }
.side svg { width: 25px; height: 25px; margin: 4px 7.5px 0 0; }
.side li.seen { color: #5c1a6a; }
.side li.here { font-weight: bold; }
.cs-c { font: bold 41px "Open Sans", sans-serif; fill: #666; }
.cs-s { font: bold 41px "Open Sans", sans-serif; fill: #222; }

.content { width: 1408px; padding-top: 15px; }
h1 { margin: 0 0 27px; font-weight: normal; font-size: 30.8px; line-height: 37px; color: #333; }
h2 { margin: 22px 0 0; font-weight: normal; font-size: 22px; line-height: 26px; }
.cards { display: grid; grid-template-columns: 567px 808px; gap: 33px; }
.card { border: 1px solid #dfdfdf; border-radius: 4px; height: 367px; background: #fff; }
.card-head { display: flex; justify-content: space-between; align-items: flex-start; height: 58px; padding: 0 26px 0 21px; }
.hist .card-head { padding: 0 27px 0 22.6px; }
.bell { margin-top: 9.5px; }
.trend { margin-top: 15px; }
.chart text { fill: #333; }
.ctitle { font-size: 17.6px; }
.lab { font-size: 13.2px; }
.mid { text-anchor: middle; }
.end { text-anchor: end; }
.chev { fill: none; stroke: #d9d9d9; stroke-width: 5.6; }

.details { margin-top: 35px; height: 500px; padding: 0 22px 0 21px; }
.details .dh { height: 61px; padding: 0 5px 0 0; }
.dcs { margin-top: 16px; }
.dtabs { display: flex; height: 41px; border-bottom: 1px solid #dee2e6; }
.dtabs a { padding: 0 17.7px; border: 1px solid transparent; line-height: 40px; text-decoration: underline; color: #203c90; height: 41px; }
.dtabs .on { border-color: #dee2e6 #dee2e6 #fff; border-radius: 4px 4px 0 0; color: #495057; }
.controls { display: flex; align-items: flex-start; height: 71px; padding-top: 22px; }
.controls span { line-height: 32px; }
.select { width: 67px; height: 34px; margin: 0 4px; border: 1px solid #ced4da; border-radius: 4px; display: flex; align-items: center; justify-content: space-between; padding: 0 14px; font-size: 11.5px; line-height: 28px; color: #495057; }
.controls .slabel { margin-left: auto; margin-right: 7px; line-height: 34px; }
.sinput { width: 191px; height: 34px; border: 1px solid #ced4da; border-radius: 4px; }
.tr { display: grid; grid-template-columns: 568px 113px 682px; height: 48px; line-height: 47px; border-bottom: 1px solid #dee2e6; }
.tr > span { padding: 0 13.5px; position: relative; display: flex; }
.tr i { display: block; height: 21px; background: #ffc5d2; margin-top: 13px; }
.tr a { text-decoration: underline; color: #203c90; }
.th { height: 50px; border-top: 1px solid #dee2e6; border-bottom-width: 2px; font-weight: bold; }
.th em { font-style: normal; font-weight: normal; margin-left: auto; margin-right: -4px; color: #ccc; font-size: 15.4px; }
.th u { text-decoration: none; color: #444; }
.odd { background: #f1f1f1; }
```
